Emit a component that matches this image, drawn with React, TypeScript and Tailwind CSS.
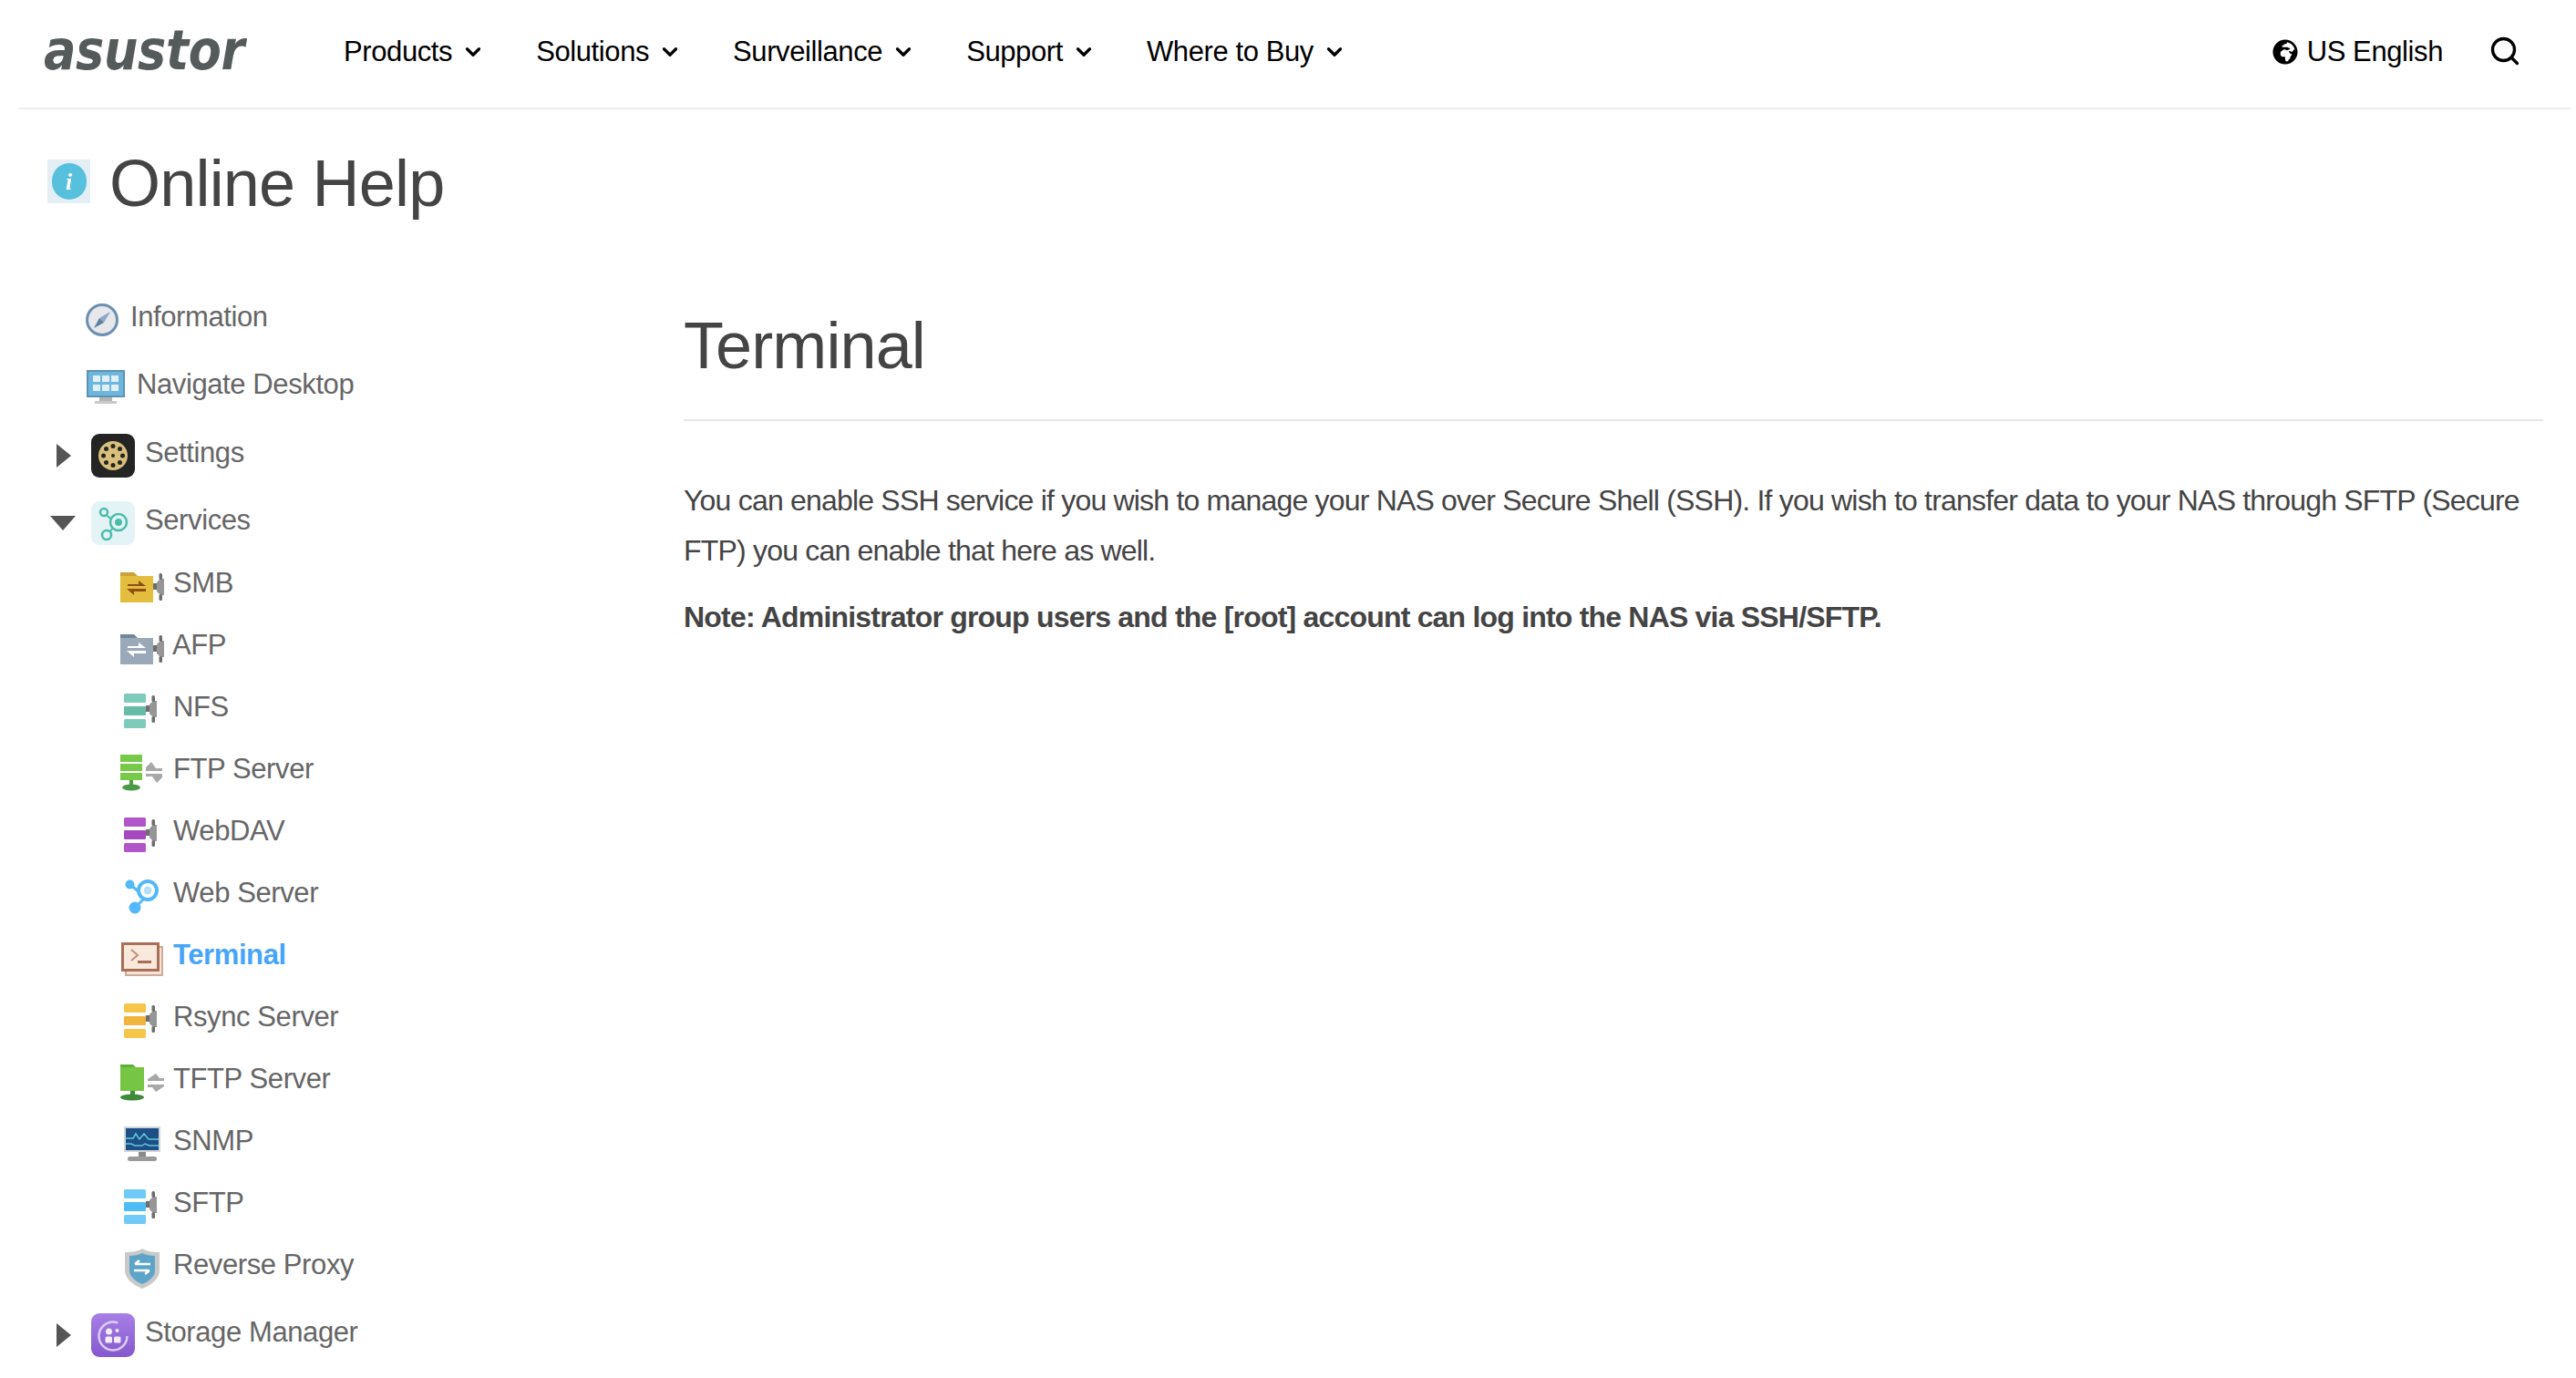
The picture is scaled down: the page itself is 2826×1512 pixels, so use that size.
import type { ReactNode } from 'react';
import { ChevronDown, Search } from 'lucide-react';
import { FaGlobeAfrica } from 'react-icons/fa';

const navItems = ['Products', 'Solutions', 'Surveillance', 'Support', 'Where to Buy'];

function Arrows({ color }: { color: string }) {
  return (
    <g fill={color}>
      <path d="M8 14h12v-4l8 6H8z" />
      <path d="M28 19H7l8 7v-4h13z" />
    </g>
  );
}

function Plug({ x = 0 }: { x?: number }) {
  return (
    <g transform={`translate(${x} 0)`}>
      <rect x="0" y="13" width="5" height="7" fill="#6d6d6d" />
      <path d="M4 12l4-4h4v18H8l-4-4z" fill="#969696" />
      <rect x="6.500" y="2" width="3.500" height="7" rx="1.500" fill="#6d6d6d" />
      <rect x="6.500" y="25" width="3.500" height="7" rx="1.500" fill="#6d6d6d" />
    </g>
  );
}

function Stack({ light, dark }: { light: string; dark: string }) {
  return (
    <svg viewBox="0 0 40 38" className="h-[38px] w-[40px] blur-[0.4px]">
      <rect x="0" y="0" width="24" height="10" rx="1.500" fill={light} />
      <rect x="0" y="14" width="24" height="10" rx="1" fill={dark} />
      <rect x="0" y="28" width="24" height="10" rx="1.500" fill={light} />
      <Plug x={24} />
    </svg>
  );
}

function FolderPlug({ tab, body, arrow }: { tab: string; body: string; arrow: string }) {
  return (
    <svg viewBox="0 0 48 34" className="h-[34px] w-[48px] blur-[0.4px]">
      <path d="M0 1h15l4 4h17v5H0z" fill={tab} />
      <rect x="0" y="5" width="36" height="29" fill={body} />
      <Arrows color={arrow} />
      <Plug x={36} />
    </svg>
  );
}

function ServerArrows() {
  return (
    <svg viewBox="0 0 48 40" className="h-[40px] w-[48px] blur-[0.4px]">
      <rect x="0" y="0" width="24" height="8" fill="#78c84a" />
      <rect x="0" y="10" width="24" height="8" fill="#78c84a" />
      <rect x="0" y="20" width="24" height="8" fill="#78c84a" />
      <rect x="10" y="28" width="4" height="6" fill="#4a9a46" />
      <ellipse cx="12" cy="36" rx="10" ry="3.500" fill="#4a9a46" />
      <path d="M28 18h18v-3h-7l-5-7-6 6z" fill="#a8a8a8" />
      <path d="M46 21H28v3h7l5 7 6-6z" fill="#a8a8a8" />
    </svg>
  );
}

function FolderArrows() {
  return (
    <svg viewBox="0 0 48 40" className="h-[40px] w-[48px] blur-[0.4px]">
      <path d="M0 0h14l3 3h9v5H0z" fill="#5fae3a" />
      <rect x="0" y="3" width="26" height="26" fill="#77c544" />
      <rect x="11" y="29" width="5" height="5" fill="#3f8a3a" />
      <ellipse cx="13" cy="36" rx="13" ry="3.500" fill="#3f8a3a" />
      <path d="M30 18h18v-3h-5l-4-5-9 6z" fill="#a8a8a8" />
      <path d="M48 22H30v3h5l4 5 9-6z" fill="#a8a8a8" />
    </svg>
  );
}

function Nodes({ a, b }: { a: string; b: string }) {
  return (
    <svg viewBox="0 0 38 38" className="h-[38px] w-[38px] blur-[0.4px]">
      <path d="M5 5l11 9M22 20L11 31" stroke={a} strokeWidth="3" fill="none" />
      <circle cx="5.500" cy="5.500" r="5" fill={a} />
      <circle cx="11" cy="31" r="6.500" fill={a} />
      <circle cx="25" cy="12" r="10" fill="#fff" stroke={a} strokeWidth="4" />
      <circle cx="25" cy="12" r="4.500" fill={b} />
    </svg>
  );
}

function TerminalIcon() {
  return (
    <svg viewBox="0 0 46 37" className="h-[37px] w-[46px] blur-[0.4px]">
      <rect x="5" y="5" width="40" height="31" fill="#f7e4d8" stroke="#d2a995" strokeWidth="2" />
      <rect x="1.500" y="1.500" width="39" height="29" fill="#f9e8dc" stroke="#a86f58" strokeWidth="3" />
      <path d="M11 8l7 6-7 6" stroke="#c38f78" strokeWidth="2" fill="none" />
      <rect x="18" y="20" width="15" height="3" fill="#a86f58" />
    </svg>
  );
}

function SnmpIcon() {
  return (
    <svg viewBox="0 0 40 40" className="h-[40px] w-[40px] blur-[0.4px]">
      <rect x="0" y="0" width="40" height="28" fill="#cfd6dc" />
      <rect x="2" y="2" width="36" height="24" fill="#1d4f85" />
      <path d="M2 13h8l3-5 4 6 5-6 5 6h11" stroke="#5cc6dc" strokeWidth="1.500" fill="none" />
      <path d="M2 19h6l4 2h8l3-2 5 2h10" stroke="#5cc6dc" strokeWidth="1.500" fill="none" />
      <rect x="16" y="28" width="8" height="5" fill="#8a8a8a" />
      <rect x="4" y="33" width="32" height="5" rx="2.500" fill="#9a9a9a" />
    </svg>
  );
}

function ShieldIcon() {
  return (
    <svg viewBox="0 0 38 44" className="h-[44px] w-[38px] blur-[0.4px]">
      <path d="M19 0c5 3 11 4 19 4v20c0 9-9 16-19 20C9 40 0 33 0 24V4c8 0 14-1 19-4z" fill="#c9c9c9" />
      <path d="M19 5c4 2 9 3 14 3v16c0 7-7 12-14 15C12 36 5 31 5 24V8c5 0 10-1 14-3z" fill="#5da5c8" />
      <path d="M11 17h17M11 17l5-4" stroke="#fff" strokeWidth="2.500" fill="none" />
      <path d="M27 24H10M27 24l-5 4" stroke="#fff" strokeWidth="2.500" fill="none" />
    </svg>
  );
}

function SettingsIcon() {
  return (
    <svg viewBox="0 0 48 48" className="h-[48px] w-[48px] blur-[0.4px]">
      <rect width="48" height="48" rx="9" fill="#242424" />
      <circle cx="24" cy="24" r="16" fill="#d8bf7c" />
      <g fill="#242424">
        <circle cx="24" cy="13.500" r="2.500" />
        <circle cx="31.500" cy="16.500" r="2.500" />
        <circle cx="34.500" cy="24" r="2.500" />
        <circle cx="31.500" cy="31.500" r="2.500" />
        <circle cx="24" cy="34.500" r="2.500" />
        <circle cx="16.500" cy="31.500" r="2.500" />
        <circle cx="13.500" cy="24" r="2.500" />
        <circle cx="16.500" cy="16.500" r="2.500" />
        <circle cx="24" cy="24" r="2" />
      </g>
    </svg>
  );
}

function ServicesIcon() {
  return (
    <svg viewBox="0 0 48 48" className="h-[48px] w-[48px] blur-[0.3px]">
      <rect width="48" height="48" rx="9" fill="#e4f3f6" />
      <path d="M14 13l11 9M27 26L18 36" stroke="#4cbcaa" strokeWidth="2" fill="none" />
      <circle cx="14" cy="12" r="4" fill="#e4f3f6" stroke="#4cbcaa" strokeWidth="2.500" />
      <circle cx="17" cy="37" r="5" fill="#e4f3f6" stroke="#4cbcaa" strokeWidth="2.500" />
      <circle cx="30" cy="23" r="9" fill="#e4f3f6" stroke="#4cbcaa" strokeWidth="2.500" />
      <circle cx="30" cy="23" r="4" fill="#4cbcaa" />
    </svg>
  );
}

function StorageIcon() {
  return (
    <svg viewBox="0 0 48 48" className="h-[48px] w-[48px] blur-[0.3px]">
      <defs>
        <linearGradient id="storage-bg" x1="0" y1="0" x2="0" y2="1">
          <stop offset="0" stopColor="#a77fe6" />
          <stop offset="1" stopColor="#8558cf" />
        </linearGradient>
      </defs>
      <rect width="48" height="48" rx="9" fill="url(#storage-bg)" />
      <circle cx="24" cy="25" r="15.500" fill="none" stroke="#dccdf7" strokeWidth="2.500" strokeDasharray="78 20" />
      <circle cx="19.500" cy="20" r="3.500" fill="#f2ecfd" />
      <circle cx="28.500" cy="19" r="2" fill="#f2ecfd" />
      <rect x="15.500" y="25.500" width="7.500" height="7" rx="1.500" fill="#f2ecfd" />
      <rect x="25" y="25.500" width="7.500" height="7" rx="1.500" fill="#f2ecfd" />
    </svg>
  );
}

function InfoCompass() {
  return (
    <svg viewBox="0 0 36 36" className="h-[36px] w-[36px] blur-[0.3px]">
      <circle cx="18" cy="18" r="16.500" fill="#e6e8ec" stroke="#6d8fb0" strokeWidth="3" />
      <path d="M27 9L20 21l-5-5z" fill="#8ea9c6" />
      <path d="M9 27l6-11 5 5z" fill="#5f7f9f" />
    </svg>
  );
}

function DesktopIcon() {
  return (
    <svg viewBox="0 0 42 38" className="h-[38px] w-[42px] blur-[0.3px]">
      <rect x="1" y="1" width="40" height="28" fill="#6fb6dc" stroke="#5b93b3" strokeWidth="2" />
      <g fill="#dff0f9">
        <rect x="7" y="6" width="8" height="7" />
        <rect x="17" y="6" width="8" height="7" />
        <rect x="27" y="6" width="8" height="7" />
        <rect x="7" y="16" width="8" height="7" />
        <rect x="17" y="16" width="8" height="7" />
        <rect x="27" y="16" width="8" height="7" />
      </g>
      <rect x="14" y="30" width="14" height="4" fill="#b4b4b4" />
      <rect x="9" y="34" width="24" height="3" fill="#c9c9c9" />
    </svg>
  );
}

function Row({ icon, label, arrow, className, spacer = 'w-[100px]', labelClass = 'ml-[11px]' }: { icon: ReactNode; label: string; arrow?: 'open' | 'closed'; className?: string; spacer?: string; labelClass?: string }) {
  return (
    <li className={`flex h-[74px] items-center ${className ?? ''}`}>
      <div className={`flex shrink-0 justify-center pl-[40px] pt-[6px] ${spacer}`}>
        {arrow === 'closed' && <div className="h-0 w-0 border-y-[13px] border-l-[16px] border-y-transparent border-l-[#555]" />}
        {arrow === 'open' && <div className="mr-[2px] h-0 w-0 border-x-[14px] border-t-[16px] border-x-transparent border-t-[#555]" />}
      </div>
      <div className="flex w-[48px] shrink-0 justify-center pt-[6px]">{icon}</div>
      <span className={labelClass}>{label}</span>
    </li>
  );
}

function ChildRow({ icon, label, active, labelClass = 'ml-[10px]' }: { icon: ReactNode; label: string; active?: boolean; labelClass?: string }) {
  return (
    <li className="flex h-[68px] items-center pl-[132px]">
      <div className="flex w-[48px] shrink-0 justify-center pt-[8px]">{icon}</div>
      <span className={active ? `${labelClass} font-bold text-[#46a5f8]` : labelClass}>{label}</span>
    </li>
  );
}

export default function App() {
  return (
    <div className="h-[1512px] w-full overflow-hidden bg-white font-['Liberation_Sans',Arial,sans-serif]">
      <header className="ml-[20px] mr-[6px] flex h-[120px] items-center border-b-2 border-[#eeeeee] pb-[4px] text-[31px] tracking-[-0.4px] text-black">
        <div className="w-[357px] pl-[28px]">
          <svg viewBox="0 0 262 76" className="h-[76px] w-[262px]">
            <text x="0" y="57" textLength="220" lengthAdjust="spacingAndGlyphs" fontFamily="DejaVu Sans" fontWeight="700" fontStyle="italic" fontSize="60" fill="#555a5a">asustor</text>
          </svg>
        </div>
        <nav className="flex flex-1 items-center gap-[56px]">
          {navItems.map((item) => (
            <div key={item} className="flex items-center gap-[10px]">
              <span>{item}</span>
              <ChevronDown className="h-[26px] w-[26px]" strokeWidth={3} />
            </div>
          ))}
        </nav>
        <div className="flex items-center">
          <FaGlobeAfrica className="h-[28px] w-[28px]" />
          <span className="ml-[10px]">US English</span>
          <Search className="mb-[2px] ml-[50px] mr-[54px] h-[36px] w-[36px]" strokeWidth={2.2} />
        </div>
      </header>

      <div className="flex h-[191px] items-start pl-[52px] pt-[55px] text-[#444]">
        <div className="flex h-[48px] w-[47px] items-center justify-center bg-[#e3eff5] blur-[0.3px]">
          <div className="flex h-[40px] w-[38px] items-center justify-center rounded-full bg-[#57c1dd] font-['Liberation_Serif',serif] text-[26px] font-bold italic text-white">i</div>
        </div>
        <h2 className="-mt-[14px] ml-[21px] text-[72px] leading-[80px] tracking-[-0.8px]">Online Help</h2>
      </div>

      <div className="flex">
        <aside className="w-[750px] shrink-0 text-[31px] tracking-[-0.4px] text-[#666]">
          <ul>
            <Row icon={<InfoCompass />} label="Information" spacer="w-[88px]" labelClass="ml-[7px]" />
            <Row icon={<DesktopIcon />} label="Navigate Desktop" spacer="w-[92px]" labelClass="ml-[10px]" />
            <Row icon={<SettingsIcon />} label="Settings" arrow="closed" className="mt-[1px]" />
            <Row icon={<ServicesIcon />} label="Services" arrow="open" className="h-[72px]" />
            <ul className="-mt-[2px]">
              <ChildRow icon={<FolderPlug tab="#c9a23a" body="#e3bd3d" arrow="#8f4d16" />} label="SMB" />
              <ChildRow icon={<FolderPlug tab="#6f8798" body="#9aa9b8" arrow="#ffffff" />} label="AFP" labelClass="ml-[9px]" />
              <ChildRow icon={<Stack light="#7ecabb" dark="#66bba9" />} label="NFS" />
              <ChildRow icon={<ServerArrows />} label="FTP Server" />
              <ChildRow icon={<Stack light="#b056c8" dark="#a649c0" />} label="WebDAV" />
              <ChildRow icon={<Nodes a="#52b8f8" b="#b5e2fb" />} label="Web Server" />
              <ChildRow icon={<TerminalIcon />} label="Terminal" active />
              <ChildRow icon={<Stack light="#f5c64a" dark="#f0b53c" />} label="Rsync Server" />
              <ChildRow icon={<FolderArrows />} label="TFTP Server" />
              <ChildRow icon={<SnmpIcon />} label="SNMP" />
              <ChildRow icon={<Stack light="#6fcaf8" dark="#4fbcf6" />} label="SFTP" />
              <ChildRow icon={<ShieldIcon />} label="Reverse Proxy" />
            </ul>
            <Row icon={<StorageIcon />} label="Storage Manager" arrow="closed" className="mt-[3px]" />
          </ul>
        </aside>

        <main className="flex-1 pr-[36px] pt-[28px] text-[#444]">
          <h1 className="border-b-2 border-[#e6e6e6] pb-[41px] text-[72px] leading-[80px] tracking-[-0.9px]">Terminal</h1>
          <p className="mt-[60px] text-[32px] leading-[55px] tracking-[-0.8px]">
            You can enable SSH service if you wish to manage your NAS over Secure Shell (SSH). If you wish to transfer data to your NAS through SFTP (Secure FTP) you can enable that here as well.
          </p>
          <p className="mt-[18px] text-[32px] font-bold leading-[55px] tracking-[-0.8px]">
            Note: Administrator group users and the [root] account can log into the NAS via SSH/SFTP.
          </p>
        </main>
      </div>
    </div>
  );
}
